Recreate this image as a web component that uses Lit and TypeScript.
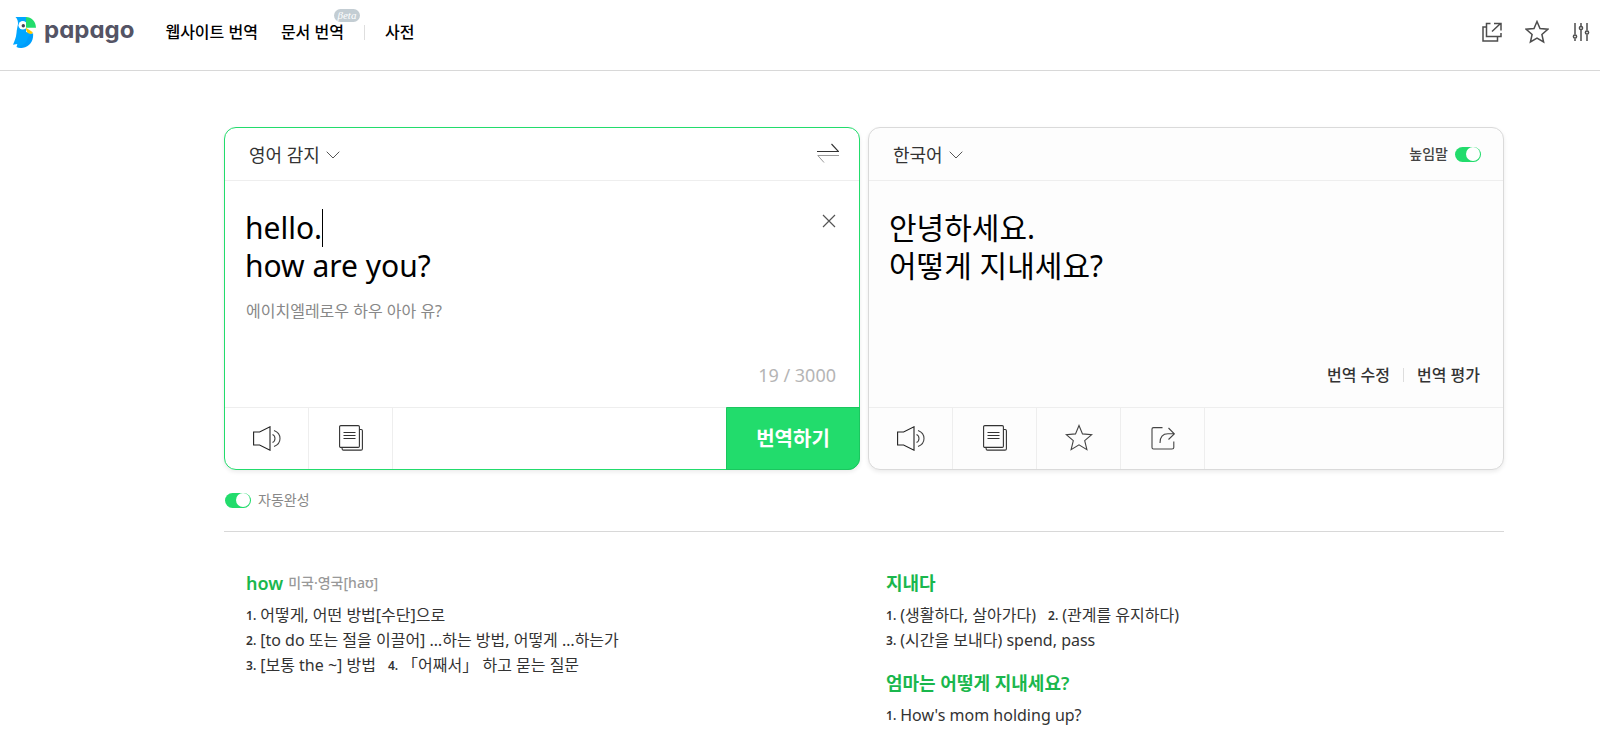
import { LitElement, html, css, nothing } from "lit";
import { customElement, property, state } from "lit/decorators.js";

const icons = {
  bird: html`<svg width="25" height="32" viewBox="0 0 25 32" aria-hidden="true">
    <path fill="#00a6ff" d="M3.500 1H14v11l7 4.500c1 8-3 14-10 15.300-3 .4-5 .2-6.500-.8l.8-3-4.300.8C2.500 25 4 22 4.500 17 4.800 13 5.500 11 6 8 6 5 5.500 3 3.500 1z" />
    <path fill="#0093f5" d="M20.500 17c.5 7-2.500 12-8 14-3 .8-5 .4-7-.6 6-.6 9.500-3.900 10.500-9.400z" opacity=".55" />
    <circle cx="10.800" cy="9.300" r="4.300" fill="#fff" />
    <path fill="#fff" d="M14 11.500h10.500l-3.500 6-7-1.500z" />
    <path fill="#22dc6c" d="M14 1c5.500 0 9.700 4.200 10 10.800H14z" />
    <circle cx="11.300" cy="9.700" r="1.700" fill="#444455" />
    <path fill="#ffc800" d="M14 11.800l6.800 4.400-.8 1.600c-3.500.7-6-1.500-6-6z" />
  </svg>`,
  open: html`<svg width="20" height="20" viewBox="0 0 20 20" aria-hidden="true">
    <path d="M8.500 1.500H4.500v13h14.500V11M4.500 5H1v14h14.500v-4.500M10 9.500L18.500 1.500M12 1.500h7v7" fill="none" stroke="#4d4d4d" stroke-width="1.500" />
  </svg>`,
  starTop: html`<svg width="24" height="24" viewBox="0 0 24 24" aria-hidden="true">
    <path d="M12 1.500l3 7 7.800.7-5.900 5.200 1.700 7.600-6.600-3.900L5.400 22l1.700-7.600L1.200 9.200 9 8.500z" fill="none" stroke="#4d4d4d" stroke-width="1.500" />
  </svg>`,
  sliders: html`<svg width="18" height="20" viewBox="0 0 18 20" aria-hidden="true">
    <g fill="none" stroke="#4d4d4d" stroke-width="1.500">
      <path d="M3 1v11.500M3 16.500V19M9 1v3M9 8v11M15 1v7.500M15 12.500V19" />
      <circle cx="3" cy="14.500" r="1.600" /><circle cx="9" cy="6" r="1.600" /><circle cx="15" cy="10.500" r="1.600" />
    </g>
  </svg>`,
  chevron: html`<svg width="14" height="8" viewBox="0 0 14 8" aria-hidden="true">
    <path d="M.7.7L7 7 13.300.7" fill="none" stroke="#555" />
  </svg>`,
  swap: html`<svg width="22" height="20" viewBox="0 0 22 20" aria-hidden="true">
    <path d="M0 8.500h21.500L14.500 1" fill="none" stroke="#333" stroke-width="1.100" />
    <path d="M22 12.500H.8L7 19.500" fill="none" stroke="#999" />
  </svg>`,
  close: html`<svg width="14" height="14" viewBox="0 0 14 14" aria-hidden="true">
    <path d="M1 1l12 12M13 1L1 13" fill="none" stroke="#555" stroke-width="1.200" />
  </svg>`,
  speaker: html`<svg width="28" height="25" viewBox="0 0 28 25" aria-hidden="true">
    <g fill="none" stroke="#222" stroke-width="1.100">
      <path d="M.6 6h6L17 .8v23.400L6.600 19h-6z" />
      <path d="M19.500 8.500c3.300 1.500 3.300 6.500 0 8M21 4.500c8 3 8 13 0 16" stroke="#444" />
    </g>
  </svg>`,
  book: html`<svg width="24" height="26" viewBox="0 0 24 26" aria-hidden="true">
    <g fill="none" stroke="#333" stroke-width="1.100">
      <rect x=".6" y=".6" width="19.800" height="21.800" rx="1.200" />
      <path d="M20.400 4.500h1.800q1.200 0 1.200 1.200v18q0 1.400-1.400 1.400H4.500q-1.400 0-1.400-1.400v-1.200M4.500 7.500h12M4.500 10.500h12M4.500 13.500h12" />
    </g>
  </svg>`,
  star: html`<svg width="28" height="28" viewBox="0 0 28 28" aria-hidden="true">
    <path d="M14 1.500l3.500 8.400 9.200.8-7 6 2.200 9L14 20.900l-7.900 4.800 2.200-9-7-6 9.200-.8z" fill="none" stroke="#444" stroke-width="1.100" />
  </svg>`,
  share: html`<svg width="24" height="24" viewBox="0 0 24 24" aria-hidden="true">
    <path d="M11.500 1.600H2.500q-1.500 0-1.500 1.500v18.400q0 1.500 1.500 1.500H21q1.800 0 1.800-1.500v-6M9 17c0-6 3-9.200 8-9.200h6M17.500 2L23.300 7.800 17.500 13.500" fill="none" stroke="#444" stroke-width="1.100" />
  </svg>`,
};

const base = css`
  *, *::before, *::after { box-sizing: border-box; }
  button, textarea, input {
    margin: 0; padding: 0; border: 0; background: none; color: inherit; font: inherit;
  }
  button { cursor: pointer; }
  a { color: inherit; text-decoration: none; }
  svg { display: block; flex: none; }
`;

@customElement("papago-header")
class PapagoHeader extends LitElement {
  static styles = [base, css`
    :host {
      display: flex; align-items: center; justify-content: space-between;
      height: 71px; padding: 0 10px 6px 12px; border-bottom: 1px solid #d8d8d8;
    }
    .side, .nav, .tools, .logo { display: flex; align-items: center; }
    .side { gap: 31px; }
    .logo { gap: 7px; }
    .word {
      font: 700 24px/32px Inter, sans-serif; color: #545465;
      font-feature-settings: "cv11"; padding-bottom: 4px;
    }
    .nav { font-size: 16px; font-weight: 500; line-height: 24px; color: #000; }
    .doc { position: relative; margin-left: 23px; }
    .beta {
      position: absolute; right: -16px; top: -11px; width: 26px; height: 13px; border-radius: 7px;
      background: #c3cdd3; color: #fff; text-align: center;
      font: italic 11px/12px "Liberation Serif", serif;
    }
    .bar { width: 1px; height: 15px; margin: 0 20px; background: #dedede; }
    .tools { gap: 23px; }
  `];

  render() {
    return html`
      <div class="side">
        <a class="logo" href="#">${icons.bird}<span class="word">papago</span></a>
        <nav class="nav">
          <a href="#">웹사이트 번역</a>
          <a class="doc" href="#">문서 번역<span class="beta">βeta</span></a>
          <span class="bar"></span>
          <a href="#">사전</a>
        </nav>
      </div>
      <div class="tools">
        <button aria-label="새 창">${icons.open}</button>
        <button aria-label="즐겨찾기">${icons.starTop}</button>
        <button aria-label="설정">${icons.sliders}</button>
      </div>`;
  }
}

@customElement("toggle-switch")
class ToggleSwitch extends LitElement {
  @property() label = "";
  @property({ type: Boolean }) before = false;

  static styles = [base, css`
    :host { display: block; }
    .row { display: flex; align-items: center; gap: 7px; font-size: 14px; line-height: 20px; cursor: pointer; }
    .row.before { flex-direction: row-reverse; }
    .switch {
      appearance: none; display: flex; align-items: center; width: 26px; height: 15px; border-radius: 8px;
      background: #c8c8c8; cursor: pointer; padding: 0 1px;
    }
    .switch::before { content: ""; width: 14px; height: 14px; border-radius: 50%; background: #fff; }
    .switch:checked { background: #22dc6c; justify-content: flex-end; }
  `];

  render() {
    return html`<label class="row ${this.before ? "before" : ""}">
      <input class="switch" type="checkbox" checked /><span>${this.label}</span>
    </label>`;
  }
}

@customElement("translate-panels")
class TranslatePanels extends LitElement {
  @state() text = "hello.\nhow are you?";

  static styles = [base, css`
    :host { display: grid; grid-template-columns: 1fr 1fr; gap: 8px; }
    .card {
      display: flex; flex-direction: column; border: 1px solid #dadada; border-radius: 12px;
      background: #fdfdfd; box-shadow: 0 2px 4px rgba(0, 0, 0, .08);
    }
    .card.source { border-color: #22dc6c; background: #fff; }
    .top {
      display: flex; align-items: center; justify-content: space-between;
      height: 53px; padding: 2px 22px 0 24px; border-bottom: 1px solid #eee;
    }
    .source .top { padding-right: 20px; }
    .lang { display: flex; align-items: center; gap: 6px; font-size: 18px; line-height: 26px; color: #333; }
    .swap { padding-bottom: 4px; }
    .honor { color: #444; font-weight: 500; padding-bottom: 2px; }
    .body { display: flex; flex-direction: column; min-height: 226px; padding: 28px 23px 17px 20px; }
    .entry { display: flex; align-items: flex-start; }
    .field { position: relative; flex: 1; display: flex; }
    .text { font-size: 30px; line-height: 38px; color: #000; }
    .input {
      display: block; width: 100%; height: 76px; resize: none; outline: 0; overflow: hidden;
      caret-color: transparent;
    }
    .caret { position: absolute; left: 77px; top: 0; width: 1px; height: 38px; background: #000; }
    .clear { margin: 5px 0 0 16px; }
    .reading { margin: 14px 0 0; padding-left: 1px; font-size: 16px; line-height: 24px; color: #888; }
    .meta {
      display: flex; align-items: center; justify-content: flex-end; margin-top: auto;
      line-height: 30px; color: #333; font-weight: 500;
    }
    .count { font-size: 18px; color: #b5b5b5; font-weight: 400; }
    .bar { width: 1px; height: 14px; margin: 0 13px; background: #ddd; }
    .foot { display: flex; height: 62px; border-top: 1px solid #eee; }
    .tool {
      display: flex; align-items: center; justify-content: center;
      width: 84px; padding: 0 0 1px 1px; border-right: 1px solid #eee;
    }
    .submit {
      width: 134px; margin: -1px -1px -1px auto; padding-bottom: 2px;
      border: 1px solid #1bc65f; border-radius: 0 0 12px 0;
      background: #22dc6c; color: #fff; font-size: 20px; font-weight: 700;
    }
  `];

  render() {
    return html`
      <section class="card source">
        <div class="top">
          <button class="lang">영어 감지 ${icons.chevron}</button>
          <button class="swap" aria-label="언어 바꾸기">${icons.swap}</button>
        </div>
        <div class="body">
          <div class="entry">
            <div class="field">
              <textarea class="text input" aria-label="번역할 내용" spellcheck="false" .value=${this.text}
                @input=${(e: Event) => (this.text = (e.target as HTMLTextAreaElement).value)}></textarea>
              <span class="caret"></span>
            </div>
            <button class="clear" aria-label="지우기">${icons.close}</button>
          </div>
          <p class="reading">에이치엘레로우 하우 아아 유?</p>
          <div class="meta count">${this.text.length} / 3000</div>
        </div>
        <div class="foot">
          <button class="tool" aria-label="듣기">${icons.speaker}</button>
          <button class="tool" aria-label="복사">${icons.book}</button>
          <button class="submit">번역하기</button>
        </div>
      </section>
      <section class="card">
        <div class="top">
          <button class="lang">한국어 ${icons.chevron}</button>
          <toggle-switch class="honor" label="높임말" before></toggle-switch>
        </div>
        <div class="body">
          <div class="text">안녕하세요.<br />어떻게 지내세요?</div>
          <div class="meta">
            <a href="#">번역 수정</a><span class="bar"></span><a href="#">번역 평가</a>
          </div>
        </div>
        <div class="foot">
          <button class="tool" aria-label="듣기">${icons.speaker}</button>
          <button class="tool" aria-label="복사">${icons.book}</button>
          <button class="tool" aria-label="즐겨찾기">${icons.star}</button>
          <button class="tool" aria-label="공유">${icons.share}</button>
        </div>
      </section>`;
  }
}

interface Entry { word: string; sound?: string; lines: string[][]; }

const english: Entry[] = [
  {
    word: "how",
    sound: "미국·영국[haʊ]",
    lines: [
      ["어떻게, 어떤 방법[수단]으로"],
      ["[to do 또는 절을 이끌어] …하는 방법, 어떻게 …하는가"],
      ["[보통 the ~] 방법", "「어째서」 하고 묻는 질문"],
    ],
  },
];

const korean: Entry[] = [
  { word: "지내다", lines: [["(생활하다, 살아가다)", "(관계를 유지하다)"], ["(시간을 보내다) spend, pass"]] },
  { word: "엄마는 어떻게 지내세요?", lines: [["How's mom holding up?"]] },
];

@customElement("word-list")
class WordList extends LitElement {
  @property({ attribute: false }) entries: Entry[] = [];

  static styles = [base, css`
    :host { display: flex; flex-direction: column; gap: 17px; padding-left: 22px; }
    .title {
      display: flex; align-items: center; gap: 5px; margin: 0 0 7px;
      font-size: 18px; line-height: 26px; font-weight: 600; color: #1ab74d;
    }
    .sound { font-size: 14px; font-weight: 500; color: #999; }
    .line { display: flex; gap: 12px; font-size: 16px; line-height: 25px; color: #333; }
    .item { display: flex; align-items: center; gap: 4px; }
    .num { font-size: 12px; font-weight: 600; }
  `];

  render() {
    return this.entries.map((entry) => {
      let n = 0;
      return html`<article>
        <h2 class="title">${entry.word}${entry.sound ? html`<span class="sound">${entry.sound}</span>` : nothing}</h2>
        ${entry.lines.map((line) => html`<div class="line">
          ${line.map((t) => html`<span class="item"><span class="num">${++n}.</span><span>${t}</span></span>`)}
        </div>`)}
      </article>`;
    });
  }
}

@customElement("app-root")
class AppRoot extends LitElement {
  static styles = [base, css`
    :host {
      display: block; background: #fff; color: #333;
      font-family: "Noto Sans", "Noto Sans CJK KR", sans-serif; font-size: 16px;
    }
    .main { padding: 56px 6% 0 14%; }
    .auto { display: flex; margin-top: 20px; padding-left: 1px; color: #888; }
    .words {
      display: grid; grid-template-columns: 1fr 1fr; margin-top: 21px;
      padding-top: 38px; border-top: 1px solid #d8d8d8;
    }
  `];

  render() {
    return html`
      <papago-header></papago-header>
      <main class="main">
        <translate-panels></translate-panels>
        <div class="auto"><toggle-switch label="자동완성"></toggle-switch></div>
        <div class="words">
          <word-list .entries=${english}></word-list>
          <word-list .entries=${korean}></word-list>
        </div>
      </main>`;
  }
}
